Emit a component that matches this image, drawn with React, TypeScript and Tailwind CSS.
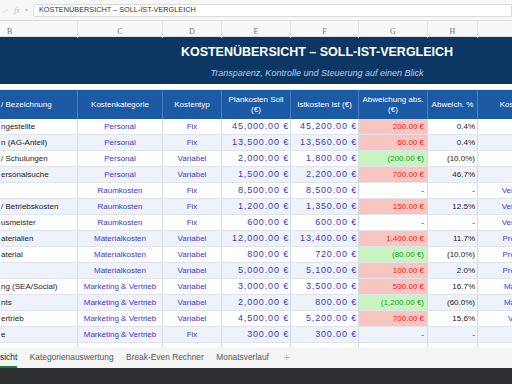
import { Check } from "lucide-react";

type Tone = "red" | "green" | "none";

type Row = {
  name: string;
  cat: string;
  typ: string;
  plan: string;
  ist: string;
  abw: string;
  pct: string;
  stelle: string;
  tone: Tone;
};

// visible part of column B only – the sheet is scrolled a bit to the right
const ROWS: Row[] = [
  { name: "ngestellte", cat: "Personal", typ: "Fix", plan: "45,000.00 €", ist: "45,200.00 €", abw: "200.00 €", pct: "0.4%", stelle: "", tone: "red" },
  { name: "n (AG-Anteil)", cat: "Personal", typ: "Fix", plan: "13,500.00 €", ist: "13,560.00 €", abw: "60.00 €", pct: "0.4%", stelle: "", tone: "red" },
  { name: "/ Schulungen", cat: "Personal", typ: "Variabel", plan: "2,000.00 €", ist: "1,800.00 €", abw: "(200.00 €)", pct: "(10.0%)", stelle: "", tone: "green" },
  { name: "ersonalsuche", cat: "Personal", typ: "Variabel", plan: "1,500.00 €", ist: "2,200.00 €", abw: "700.00 €", pct: "46.7%", stelle: "", tone: "red" },
  { name: "", cat: "Raumkosten", typ: "Fix", plan: "8,500.00 €", ist: "8,500.00 €", abw: "-", pct: "-", stelle: "Verwaltung", tone: "none" },
  { name: "/ Betriebskosten", cat: "Raumkosten", typ: "Fix", plan: "1,200.00 €", ist: "1,350.00 €", abw: "150.00 €", pct: "12.5%", stelle: "Verwaltung", tone: "red" },
  { name: "usmeister", cat: "Raumkosten", typ: "Fix", plan: "600.00 €", ist: "600.00 €", abw: "-", pct: "-", stelle: "Verwaltung", tone: "none" },
  { name: "aterialien", cat: "Materialkosten", typ: "Variabel", plan: "12,000.00 €", ist: "13,400.00 €", abw: "1,400.00 €", pct: "11.7%", stelle: "Produktion", tone: "red" },
  { name: "aterial", cat: "Materialkosten", typ: "Variabel", plan: "800.00 €", ist: "720.00 €", abw: "(80.00 €)", pct: "(10.0%)", stelle: "Produktion", tone: "green" },
  { name: "", cat: "Materialkosten", typ: "Variabel", plan: "5,000.00 €", ist: "5,100.00 €", abw: "100.00 €", pct: "2.0%", stelle: "Produktion", tone: "red" },
  { name: "ng (SEA/Social)", cat: "Marketing & Vertrieb", typ: "Variabel", plan: "3,000.00 €", ist: "3,500.00 €", abw: "500.00 €", pct: "16.7%", stelle: "Marketing", tone: "red" },
  { name: "nts", cat: "Marketing & Vertrieb", typ: "Variabel", plan: "2,000.00 €", ist: "800.00 €", abw: "(1,200.00 €)", pct: "(60.0%)", stelle: "Marketing", tone: "green" },
  { name: "ertrieb", cat: "Marketing & Vertrieb", typ: "Variabel", plan: "4,500.00 €", ist: "5,200.00 €", abw: "700.00 €", pct: "15.6%", stelle: "Verkauf", tone: "red" },
  { name: "e", cat: "Marketing & Vertrieb", typ: "Fix", plan: "300.00 €", ist: "300.00 €", abw: "-", pct: "-", stelle: "", tone: "none" },
];

const GRID = "grid grid-cols-[78px_85px_59px_69px_68px_69px_50px_88px]";
const CELL = "flex items-center overflow-hidden whitespace-nowrap border-r border-[#d6dce6]";

function toneClass(tone: Tone) {
  if (tone === "red") return "bg-[#f8c5c1] text-[#ff1414]";
  if (tone === "green") return "bg-[#c7f4c0] text-[#18a018]";
  return "text-[#222]";
}

function DataRow({ r, i }: { r: Row; i: number }) {
  const band = i % 2 === 1 ? "bg-[#eef3fb]" : "bg-white";
  return (
    <div className={`${GRID} h-[16px] border-b border-[#dfe4ec] text-[8px] ${band}`}>
      <div className={`${CELL} pl-[1px] text-[#222]`}>{r.name}</div>
      <div className={`${CELL} justify-center text-[#3b35d8]`}>{r.cat}</div>
      <div className={`${CELL} justify-center text-[#3b35d8]`}>{r.typ}</div>
      <div className={`${CELL} justify-end pr-[1px] text-[9px] tracking-[0.85px] text-[#3b35d8]`}>{r.plan}</div>
      <div className={`${CELL} justify-end pr-[1px] text-[9px] tracking-[0.85px] text-[#3b35d8]`}>{r.ist}</div>
      <div className={`${CELL} justify-end pr-[3px] ${toneClass(r.tone)}`}>{r.abw}</div>
      <div className={`${CELL} justify-end pr-[2px] text-[#222]`}>{r.pct}</div>
      <div className={`${CELL} justify-center text-[#3b35d8]`}>{r.stelle}</div>
    </div>
  );
}

export default function App() {
  const letters = ["B", "C", "D", "E", "F", "G", "H", ""];
  const heads = [
    "/ Bezeichnung",
    "Kostenkategorie",
    "Kostentyp",
    "Plankosten Soll (€)",
    "Istkosten Ist (€)",
    "Abweichung abs. (€)",
    "Abweich. %",
    "Kostenstelle",
  ];

  return (
    <div className="relative h-[384px] w-[512px] overflow-hidden bg-white font-['Liberation_Sans',Arial,sans-serif]">
      {/* formula bar */}
      <div className="flex h-[20px] items-center bg-[#f7f7f7] pt-[1px]">
        <div className="flex w-[33px] items-center gap-[5px] pl-[1px] text-[#c4c4c4]">
          <Check className="h-[8px] w-[8px]" strokeWidth={1.5} />
          <span className="font-['Liberation_Serif',serif] text-[8px] italic">fx</span>
          <span className="text-[6px]">▾</span>
        </div>
        <div className="flex h-[13px] flex-1 items-center rounded-l-[2px] border border-[#dcdcdc] bg-white pl-[5px] text-[7.3px] text-[#333]">
          KOSTENÜBERSICHT – SOLL-IST-VERGLEICH
        </div>
      </div>

      {/* column letters */}
      <div className={`${GRID} h-[17px] border-t border-b border-[#dedede] bg-[#f8f8f8] font-['Liberation_Serif',serif] text-[8px] text-[#777]`}>
        {letters.map((l, i) => (
          <div
            key={i}
            className={`flex items-center border-r border-[#e4e4e4] pt-[5px] ${i === 0 ? "pl-[7px]" : "justify-center"}`}
          >
            {l}
          </div>
        ))}
      </div>

      {/* title band */}
      <div className="flex h-[47px] flex-col items-center bg-[#0c3664] pl-[122px] pt-[8px]">
        <div className="text-[12.5px] font-bold leading-[15px] text-white">
          KOSTENÜBERSICHT – SOLL-IST-VERGLEICH
        </div>
        <div className="mt-[8px] text-[9px] italic leading-[11px] text-[#b4cff1]">
          Transparenz, Kontrolle und Steuerung auf einen Blick
        </div>
      </div>

      <div className="h-[6px] border-b border-[#e6e9ee]" />

      {/* table header */}
      <div className={`${GRID} h-[29px] bg-[#1d5aa6] text-[8px] leading-[10px] text-white`}>
        {heads.map((h, i) => (
          <div
            key={i}
            className={`flex items-center overflow-hidden border-r border-[#4a7cbe] px-[2px] text-center ${i === 0 ? "whitespace-nowrap pl-[1px]" : "justify-center"}`}
          >
            {h}
          </div>
        ))}
      </div>

      {ROWS.map((r, i) => (
        <DataRow key={i} r={r} i={i} />
      ))}

      {/* partial next row */}
      <div className={`${GRID} h-[4px]`}>
        {letters.map((_, i) => (
          <div key={i} className="border-r border-[#d6dce6]" />
        ))}
      </div>

      {/* sheet tabs */}
      <div className="flex h-[21px] items-center gap-[12.5px] bg-[#f5f5f5] text-[8.4px] text-[#555]">
        <div className="relative flex h-full items-center text-[#222]">
          sicht
          <span className="absolute bottom-0 left-0 h-[2px] w-full bg-[#1f7a45]" />
        </div>
        <span>Kategorienauswertung</span>
        <span>Break-Even Rechner</span>
        <span>Monatsverlauf</span>
        <span className="pl-[2px] text-[11px] text-[#bbb]">+</span>
      </div>

      {/* window chrome */}
      <div className="h-[16px] bg-[#2d2f32]" />
    </div>
  );
}
